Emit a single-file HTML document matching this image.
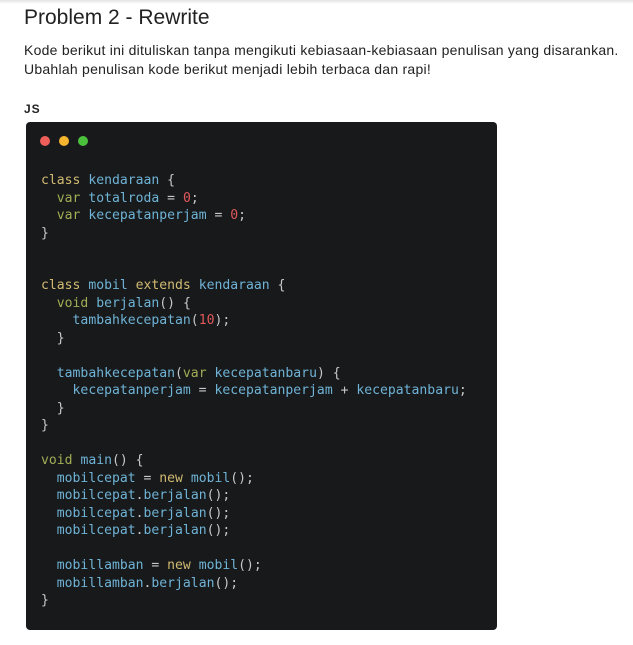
<!DOCTYPE html>
<html><head><meta charset="utf-8"><style>
body{margin:0;width:633px;height:645px;background:#fff;font-family:"Liberation Sans",Arial,sans-serif;color:#222;position:relative;overflow:hidden}
.top{position:absolute;left:0;top:0;width:633px;height:4px;background:linear-gradient(#e4e4e4,#fff)}
h1{position:absolute;left:24px;top:6px;margin:0;font-weight:normal;font-size:21px;color:#222}
p{position:absolute;left:24px;top:41px;margin:0;font-size:14px;letter-spacing:0.25px;line-height:19px;color:#222;white-space:nowrap}
.js{position:absolute;left:24px;top:102px;font-weight:bold;font-size:12px;letter-spacing:1px}
.card{position:absolute;left:26px;top:122px;width:471px;height:508px;background:#17191b;border-radius:4px}
.dot{position:absolute;top:14px;width:10px;height:10px;border-radius:50%}
pre{position:absolute;left:15px;top:50px;margin:0;font-family:"DejaVu Sans Mono","Liberation Mono",monospace;font-size:13.1px;line-height:17.5px;color:#c8c8c8}
.k{color:#d2bb72}.n{color:#6fb3d6}.v{color:#a3ad55}.r{color:#e0585b}
</style></head><body>
<div class="top"></div>
<h1>Problem 2 - Rewrite</h1>
<p>Kode berikut ini dituliskan tanpa mengikuti kebiasaan-kebiasaan penulisan yang disarankan.<br>Ubahlah penulisan kode berikut menjadi lebih terbaca dan rapi!</p>
<div class="js">JS</div>
<div class="card">
<div class="dot" style="left:14px;background:#ee5f5a"></div>
<div class="dot" style="left:33px;background:#f5b52e"></div>
<div class="dot" style="left:52px;background:#4cc13d"></div>
<pre><span class="k">class</span> <span class="n">kendaraan</span> {
  <span class="v">var</span> <span class="n">totalroda</span> = <span class="r">0</span>;
  <span class="v">var</span> <span class="n">kecepatanperjam</span> = <span class="r">0</span>;
}


<span class="k">class</span> <span class="n">mobil</span> <span class="k">extends</span> <span class="n">kendaraan</span> {
  <span class="v">void</span> <span class="n">berjalan</span>() {
    <span class="n">tambahkecepatan</span>(<span class="r">10</span>);
  }

  <span class="n">tambahkecepatan</span>(<span class="v">var</span> <span class="n">kecepatanbaru</span>) {
    <span class="n">kecepatanperjam</span> = <span class="n">kecepatanperjam</span> + <span class="n">kecepatanbaru</span>;
  }
}

<span class="v">void</span> <span class="n">main</span>() {
  <span class="n">mobilcepat</span> = <span class="k">new</span> <span class="n">mobil</span>();
  <span class="n">mobilcepat</span>.<span class="n">berjalan</span>();
  <span class="n">mobilcepat</span>.<span class="n">berjalan</span>();
  <span class="n">mobilcepat</span>.<span class="n">berjalan</span>();

  <span class="n">mobillamban</span> = <span class="k">new</span> <span class="n">mobil</span>();
  <span class="n">mobillamban</span>.<span class="n">berjalan</span>();
}</pre>
</div>
</body></html>
